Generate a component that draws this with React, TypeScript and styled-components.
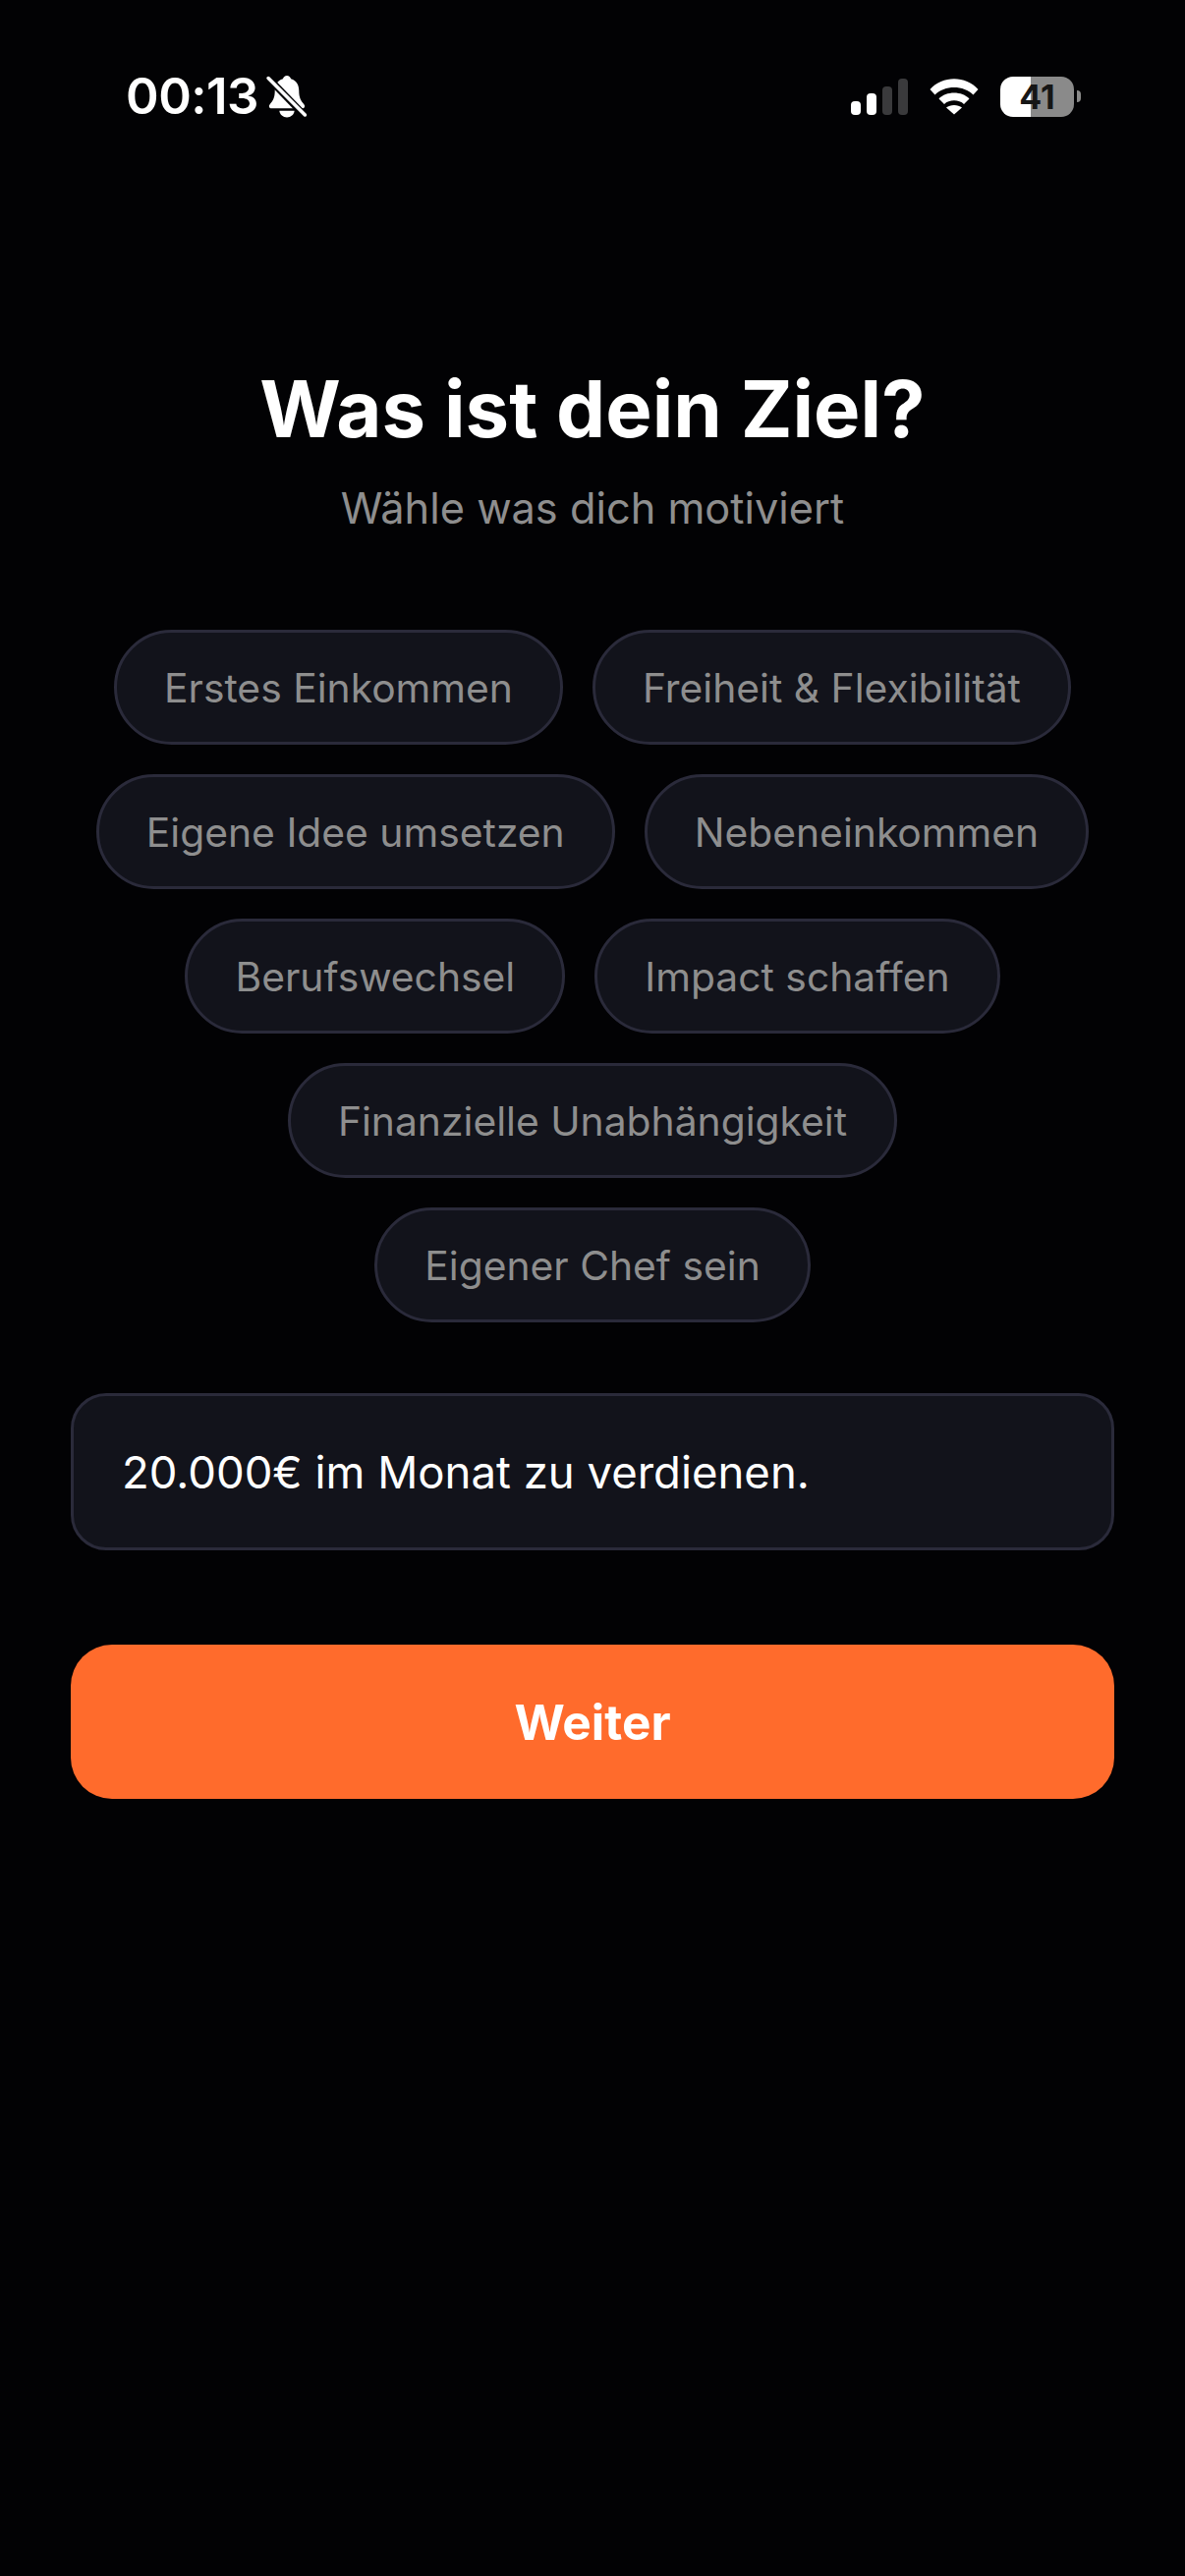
import { FC } from 'react';
import styled, { createGlobalStyle } from 'styled-components';

const GOALS = [
  'Erstes Einkommen',
  'Freiheit & Flexibilität',
  'Eigene Idee umsetzen',
  'Nebeneinkommen',
  'Berufswechsel',
  'Impact schaffen',
  'Finanzielle Unabhängigkeit',
  'Eigener Chef sein',
];

const App: FC = () => {
  return (
    <Page>
      <GlobalStyle />
      <StatusBar>
        <TimeGroup>
          <Time>00:13</Time>
          <svg width="44" height="45" viewBox="0 0 40 44" fill="none">
            <path
              d="M20 1c2 0 3.500 1.300 4 3.200 5.500 1.500 8 6 8 11.800 0 7 1.800 10 5 13.500 1.400 1.600.6 4-1.600 4H4.600c-2.200 0-3-2.400-1.600-4 3.200-3.500 5-6.500 5-13.500C8 10.200 10.500 5.700 16 4.200 16.500 2.300 18 1 20 1Z"
              fill="#fff"
            />
            <path d="M12.500 36h15c-.5 4-3.600 6.500-7.500 6.500s-7-2.500-7.500-6.500Z" fill="#fff" />
            <path d="M0 2l38 39" stroke="#020204" strokeWidth="7" />
            <path d="M1.500 3.500l36.500 36.500" stroke="#fff" strokeWidth="3.500" strokeLinecap="round" />
          </svg>
        </TimeGroup>
        <Indicators>
          <svg width="58" height="37" viewBox="0 0 58 37">
            <rect x="0" y="23" width="10" height="14" rx="4" fill="#fff" />
            <rect x="16" y="15" width="10" height="22" rx="4" fill="#fff" />
            <rect x="32" y="8" width="10" height="29" rx="4" fill="#3a3a3c" />
            <rect x="48" y="0" width="10" height="37" rx="4" fill="#3a3a3c" />
          </svg>
          <svg width="50" height="37" viewBox="0 0 50 37" fill="#fff">
            <path d="M.5 11C13-3.500 37-3.500 49.500 11L44.500 16.500C35 6.500 15 6.500 5.500 16.500Z" />
            <path d="M9.500 20.500C17 12.500 33 12.500 40.500 20.500L35 26C30 21 20 21 15 26Z" />
            <path d="M25 36.500 17 29.500C21 26 29 26 33 29.500Z" />
          </svg>
          <Battery>
            <BatteryBody>41</BatteryBody>
            <BatteryCap />
          </Battery>
        </Indicators>
      </StatusBar>

      <Content>
        <Title>Was ist dein Ziel?</Title>
        <Subtitle>Wähle was dich motiviert</Subtitle>
        <Chips>
          {GOALS.map((goal) => (
            <Chip key={goal}>{goal}</Chip>
          ))}
        </Chips>
        <GoalInput>20.000€ im Monat zu verdienen.</GoalInput>
        <NextButton>Weiter</NextButton>
      </Content>
    </Page>
  );
};

export default App;

const GlobalStyle = createGlobalStyle`
  html, body {
    margin: 0;
    padding: 0;
    background: #020204;
  }
`;

const Page = styled.div`
  width: 1206px;
  height: 2622px;
  background: #020204;
  color: #fff;
  font-family: Inter, 'Liberation Sans', sans-serif;
  overflow: hidden;
`;

const StatusBar = styled.div`
  display: flex;
  align-items: center;
  justify-content: space-between;
  height: 44px;
  padding: 76px 106px 0 128px;
`;

const TimeGroup = styled.div`
  display: flex;
  align-items: center;
  gap: 7px;
`;

const Time = styled.span`
  font-size: 51px;
  font-weight: 600;
  line-height: 44px;
  letter-spacing: -0.5px;
`;

const Indicators = styled.div`
  display: flex;
  align-items: center;
  gap: 22px;
`;

const Battery = styled.div`
  display: flex;
  align-items: center;
  gap: 3px;
`;

const BatteryBody = styled.div`
  width: 75px;
  height: 41px;
  border-radius: 13px;
  background: linear-gradient(90deg, #fff 0 41%, #8a8a8a 41% 100%);
  color: #161616;
  font-size: 34px;
  font-weight: 700;
  line-height: 41px;
  text-align: center;
`;

const BatteryCap = styled.div`
  width: 4px;
  height: 12px;
  border-radius: 0 6px 6px 0;
  background: #8a8a8a;
`;

const Content = styled.div`
  display: flex;
  flex-direction: column;
  align-items: center;
  padding: 246px 72px 0;
`;

const Title = styled.h1`
  margin: 0;
  font-size: 79.6px;
  font-weight: 700;
  line-height: 100px;
`;

const Subtitle = styled.p`
  margin: 24px 0 0;
  font-size: 43.3px;
  font-weight: 400;
  line-height: 54px;
  color: #8e8e8e;
`;

const Chips = styled.div`
  display: flex;
  flex-wrap: wrap;
  justify-content: center;
  gap: 30px;
  margin-top: 97px;
`;

const Chip = styled.div`
  box-sizing: border-box;
  height: 117px;
  padding: 0 48px;
  display: flex;
  align-items: center;
  border: 3px solid #2a2a3a;
  border-radius: 59px;
  background: #12131b;
  color: #8e8e8e;
  font-size: 40.8px;
  font-weight: 400;
  white-space: nowrap;
`;

const GoalInput = styled.div`
  box-sizing: border-box;
  width: 100%;
  height: 160px;
  margin-top: 72px;
  padding: 0 49px;
  display: flex;
  align-items: center;
  border: 3px solid #2a2a3a;
  border-radius: 36px;
  background: #12131b;
  font-size: 45.5px;
  font-weight: 400;
`;

const NextButton = styled.div`
  width: 100%;
  height: 157px;
  margin-top: 96px;
  display: flex;
  align-items: center;
  justify-content: center;
  border-radius: 42px;
  background: #ff6b2c;
  font-size: 49.5px;
  font-weight: 700;
`;
